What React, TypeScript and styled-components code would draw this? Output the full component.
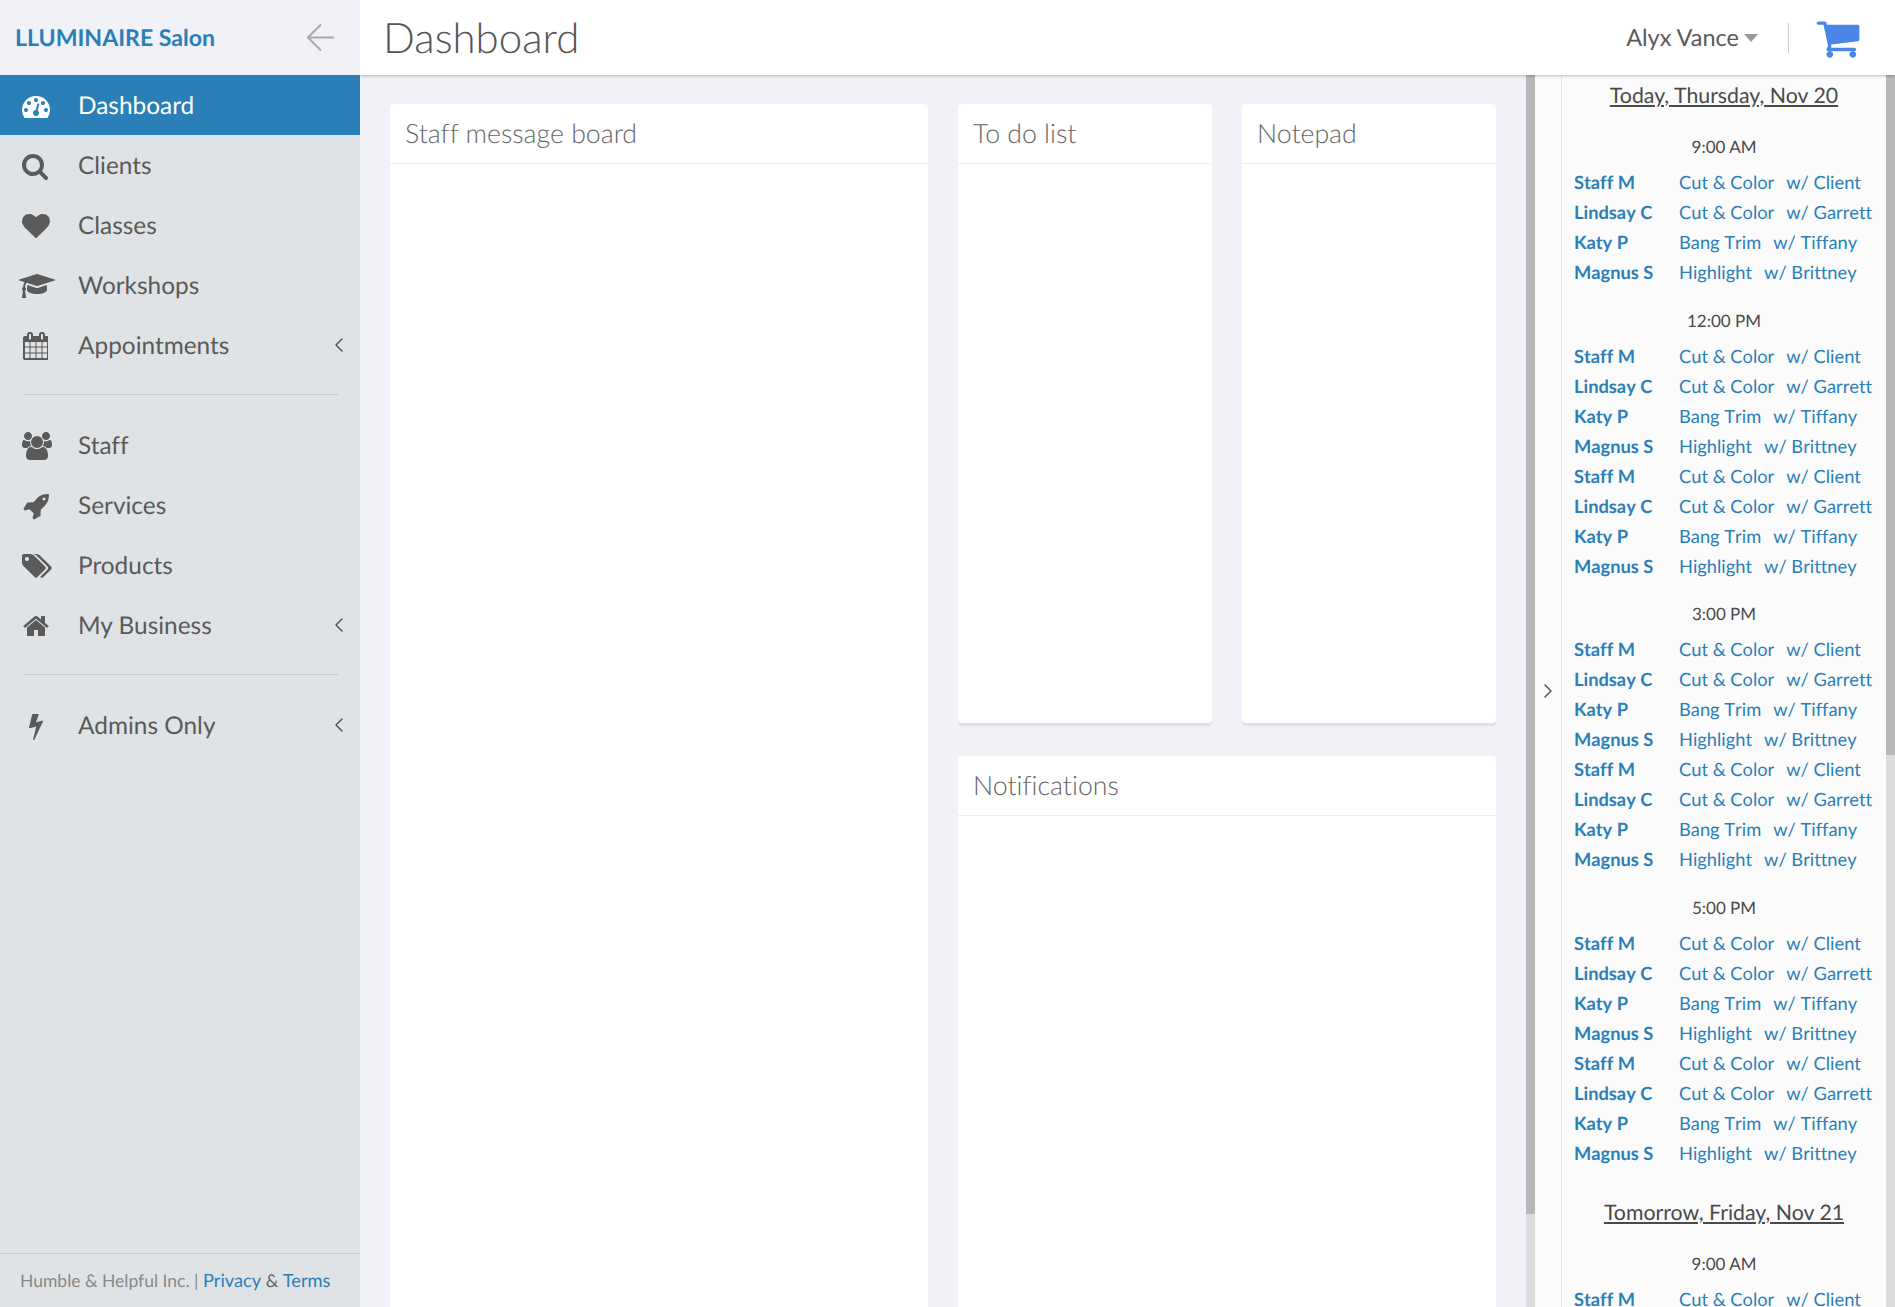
import React from 'react';
import styled, {createGlobalStyle} from 'styled-components';
import {FiArrowLeft, FiChevronLeft, FiChevronRight} from 'react-icons/fi';

const GlobalStyle = createGlobalStyle`
  html, body {
    margin: 0;
    height: 100%;
    overflow: hidden;
    font-family: Lato, "Open Sans", sans-serif;
    font-variant-ligatures: none;
    text-rendering: geometricPrecision;
    color: #555;
    background: #f0f2f7;
  }
  * { box-sizing: border-box; }
`

// font awesome 4 glyphs, the icon packages only carry the newer redraws
const glyphs = {
	dashboard: {w: 1792, d: 'M384 1152q0-53-37.500-90.500t-90.500-37.500-90.500 37.500-37.500 90.500 37.500 90.500 90.500 37.500 90.500-37.500 37.500-90.500zm192-448q0-53-37.500-90.500t-90.500-37.500-90.500 37.500-37.500 90.500 37.500 90.500 90.500 37.500 90.500-37.500 37.500-90.500zm428 481l101-382q6-26-7.500-48.500t-38.500-29.500-48 6.500-30 39.500l-101 382q-60 5-107 43.500t-63 98.500q-20 77 20 146t117 89 146-20 89-117q16-60-6-117t-72-91zm660-33q0-53-37.500-90.500t-90.500-37.500-90.500 37.500-37.500 90.500 37.500 90.500 90.500 37.500 90.500-37.500 37.500-90.500zm-640-640q0-53-37.500-90.500t-90.500-37.500-90.500 37.500-37.500 90.500 37.500 90.500 90.500 37.500 90.500-37.500 37.500-90.500zm448 192q0-53-37.500-90.500t-90.500-37.500-90.500 37.500-37.500 90.500 37.500 90.500 90.500 37.500 90.500-37.500 37.500-90.500zm320 448q0 261-141 483-19 29-54 29h-1402q-35 0-54-29-141-221-141-483 0-182 71-348t191-286 286-191 348-71 348 71 286 191 191 286 71 348z'},
	search: {w: 1792, d: 'M1216 832q0-185-131.500-316.500t-316.500-131.500-316.500 131.500-131.500 316.500 131.500 316.500 316.500 131.500 316.500-131.500 131.500-316.500zm512 832q0 52-38 90t-90 38q-54 0-90-38l-343-342q-179 124-399 124-143 0-273.500-55.500t-225-150-150-225-55.500-273.500 55.500-273.500 150-225 225-150 273.500-55.500 273.500 55.500 225 150 150 225 55.500 273.500q0 220-124 399l343 343q37 37 37 90z'},
	heart: {w: 1792, d: 'M896 1664q-26 0-44-18l-624-602q-10-8-27.500-26t-55.500-65.500-68-97.500-53.500-121-23.500-138q0-220 127-344t351-124q62 0 126.500 21.500t120 58 95.500 68.500 76 68q36-36 76-68t95.500-68.500 120-58 126.500-21.500q224 0 351 124t127 344q0 221-229 450l-623 600q-18 18-44 18z'},
	cap: {w: 2304, d: 'M1774 836l18 316q4 69-82 128t-235 93.500-323 34.500-323-34.500-235-93.500-82-128l18-316 574 181q22 7 48 7t48-7zm530-324q0 23-22 31l-1120 352q-4 1-10 1t-10-1l-652-206q-43 34-71 111.500t-34 178.500q63 36 63 109 0 69-58 107l58 433q2 14-8 25-9 11-24 11h-192q-15 0-24-11-10-11-8-25l58-433q-58-38-58-107 0-73 65-111 11-207 98-330l-333-104q-22-8-22-31t22-31l1120-352q4-1 10-1t10 1l1120 352q22 8 22 31z'},
	calendar: {w: 1664, d: 'M192 1664h288v-288h-288v288zm352 0h320v-288h-320v288zm-352-352h288v-320h-288v320zm352 0h320v-320h-320v320zm-352-384h288v-288h-288v288zm736 736h320v-288h-320v288zm-384-736h320v-288h-320v288zm768 736h288v-288h-288v288zm-384-352h320v-320h-320v320zm-352-864v-288q0-13-9.500-22.500t-22.500-9.500h-64q-13 0-22.500 9.500t-9.500 22.500v288q0 13 9.500 22.500t22.500 9.500h64q13 0 22.500-9.500t9.500-22.500zm736 864h288v-320h-288v320zm-384-384h320v-288h-320v288zm384 0h288v-288h-288v288zm32-480v-288q0-13-9.500-22.500t-22.500-9.500h-64q-13 0-22.500 9.500t-9.500 22.500v288q0 13 9.500 22.500t22.500 9.500h64q13 0 22.500-9.500t9.500-22.500zm384-64v1280q0 52-38 90t-90 38h-1408q-52 0-90-38t-38-90v-1280q0-52 38-90t90-38h128v-96q0-66 47-113t113-47h64q66 0 113 47t47 113v96h384v-96q0-66 47-113t113-47h64q66 0 113 47t47 113v96h128q52 0 90 38t38 90z'},
	users: {w: 1920, d: 'M593 896q-162 5-265 128h-134q-82 0-138-40.500t-56-118.500q0-353 124-353 6 0 43.500 21t97.500 42.500 119 21.500q67 0 133-23-5 37-5 66 0 139 81 256zm1071 637q0 120-73 189.500t-194 69.500h-874q-121 0-194-69.500t-73-189.500q0-53 3.500-103.500t14-109 26.500-108.500 43-97.500 62-81 85.500-53.500 111.500-20q10 0 43 21.500t73 48 107 48 135 21.500 135-21.500 107-48 73-48 43-21.500q61 0 111.500 20t85.500 53.500 62 81 43 97.500 26.500 108.500 14 109 3.500 103.500zm-1024-1277q0 106-75 181t-181 75-181-75-75-181 75-181 181-75 181 75 75 181zm704 384q0 159-112.500 271.500t-271.500 112.500-271.500-112.500-112.500-271.500 112.500-271.500 271.500-112.500 271.500 112.500 112.500 271.500zm576 225q0 78-56 118.500t-138 40.500h-134q-103-123-265-128 81-117 81-256 0-29-5-66 66 23 133 23 59 0 119-21.500t97.500-42.500 43.500-21q124 0 124 353zm-128-609q0 106-75 181t-181 75-181-75-75-181 75-181 181-75 181 75 75 181z'},
	rocket: {w: 1792, d: 'M1504 448q0-40-28-68t-68-28-68 28-28 68 28 68 68 28 68-28 28-68zm224-288q0 249-75.500 430.500t-253.500 360.500q-81 80-195 176l-20 379q-2 16-16 26l-384 224q-7 4-16 4-12 0-23-9l-64-64q-13-14-8-32l85-276-281-281-276 85q-3 1-9 1-14 0-23-9l-64-64q-17-19-5-39l224-384q10-14 26-16l379-20q96-114 176-195 188-187 358-258t431-71q14 0 24 9.500t10 22.500z'},
	tags: {w: 1920, d: 'M448 448q0-53-37.500-90.500t-90.500-37.500-90.500 37.500-37.500 90.500 37.500 90.500 90.500 37.500 90.500-37.500 37.500-90.500zm1067 576q0 53-37 90l-491 492q-39 37-91 37-53 0-90-37l-715-716q-38-37-64.500-101t-26.500-117v-416q0-52 38-90t90-38h416q53 0 117 26.500t102 64.500l715 714q37 39 37 91zm384 0q0 53-37 90l-491 492q-39 37-91 37-36 0-59-14t-53-45l470-470q37-37 37-90 0-52-37-91l-715-714q-38-38-102-64.500t-117-26.500h224q53 0 117 26.500t102 64.500l715 714q37 39 37 91z'},
	home: {w: 1792, d: 'M1472 992v480q0 26-19 45t-45 19h-384v-384h-256v384h-384q-26 0-45-19t-19-45v-480q0-1 .5-3t.5-3l575-474 575 474q1 2 1 6zm223-69l-62 74q-8 9-21 11h-3q-13 0-21-7l-692-577-692 577q-12 8-24 7-13-2-21-11l-62-74q-8-10-7-23.500t11-21.500l719-599q32-26 76-26t76 26l244 204v-195q0-14 9-23t23-9h192q14 0 23 9t9 23v408l219 182q10 8 11 21.500t-7 23.500z'},
	bolt: {w: 1792, d: 'M1333 566q18 20 7 44l-540 1157q-13 25-42 25-4 0-14-2-17-5-25.500-19t-4.500-30l197-808-406 101q-4 1-12 1-18 0-31-11-18-15-13-39l201-825q4-14 16-23t28-9h328q19 0 32 12.500t13 29.500q0 8-5 18l-171 463 396-98q8-2 12-2 19 0 34 15z'},
	cart: {w: 1792, d: 'M704 1536q0 52-38 90t-90 38-90-38-38-90 38-90 90-38 90 38 38 90zm896 0q0 52-38 90t-90 38-90-38-38-90 38-90 90-38 90 38 38 90zm128-1088v512q0 24-16.500 42.500t-40.500 21.500l-1044 122q13 60 13 70 0 16-24 64h920q26 0 45 19t19 45-19 45-45 19h-1024q-26 0-45-19t-19-45q0-11 8-31.500t16-36 21.500-40 15.500-29.500l-177-823h-204q-26 0-45-19t-19-45 19-45 45-19h256q16 0 28.500 6.500t19.500 15.500 13 24.500 8 26 5.500 29.500 4.500 26h1201q26 0 45 19t19 45z'},
}

type GlyphName = keyof typeof glyphs

const Glyph = ({name, size}: {name: GlyphName; size: number}) => (
	<svg width={size * glyphs[name].w / 1792} height={size} viewBox={`0 0 ${glyphs[name].w} 1792`} fill="currentColor">
		<path d={glyphs[name].d}/>
	</svg>
)

type NavEntry = {label: string; icon: GlyphName; iconLeft?: number; caret?: boolean; active?: boolean}

const navGroups: NavEntry[][] = [
	[
		{label: 'Dashboard', icon: 'dashboard', active: true},
		{label: 'Clients', icon: 'search', iconLeft: 21},
		{label: 'Classes', icon: 'heart'},
		{label: 'Workshops', icon: 'cap', iconLeft: 19},
		{label: 'Appointments', icon: 'calendar', caret: true},
	],
	[
		{label: 'Staff', icon: 'users'},
		{label: 'Services', icon: 'rocket'},
		{label: 'Products', icon: 'tags'},
		{label: 'My Business', icon: 'home', caret: true},
	],
	[
		{label: 'Admins Only', icon: 'bolt', caret: true},
	],
]

const rows = [
	{name: 'Staff M', service: 'Cut & Color', stylist: 'Client'},
	{name: 'Lindsay C', service: 'Cut & Color', stylist: 'Garrett'},
	{name: 'Katy P', service: 'Bang Trim', stylist: 'Tiffany'},
	{name: 'Magnus S', service: 'Highlight', stylist: 'Brittney'},
]

const Bookings = ({time, repeat = 1}: {time: string; repeat?: number}) => (
	<Slot>
		<SlotTime>{time}</SlotTime>
		{Array.from({length: repeat}).flatMap((_, i) => rows.map((r, j) => (
			<Booking key={`${i}-${j}`}>
				<ClientName>{r.name}</ClientName>
				<span>{r.service}</span>
				<span>w/ {r.stylist}</span>
			</Booking>
		)))}
	</Slot>
)

export default function App() {
	return (
		<Page>
			<GlobalStyle/>
			<Sidebar>
				<Brand>
					<BrandName>LLUMINAIRE Salon</BrandName>
					<FiArrowLeft size={43} strokeWidth={1.1} color="#a8a8a8"/>
				</Brand>
				<Nav>
					{navGroups.map((group, i) => (
						<NavGroup key={i}>
							{group.map(item => (
								<NavItem key={item.label} $active={item.active}>
									<NavIcon $left={item.iconLeft ?? 22}><Glyph name={item.icon} size={28}/></NavIcon>
									{item.label}
									{item.caret && <Caret><FiChevronLeft size={24} strokeWidth={1.5}/></Caret>}
								</NavItem>
							))}
						</NavGroup>
					))}
				</Nav>
				<SideFooter>
					<span>Humble &amp; Helpful Inc. | <FooterLink>Privacy</FooterLink> <Amp>&amp;</Amp> <FooterLink>Terms</FooterLink></span>
				</SideFooter>
			</Sidebar>
			<Content>
				<TopBar>
					<Title>Dashboard</Title>
					<UserMenu>
						Alyx Vance<UserCaret/>
					</UserMenu>
					<CartDivider/>
					<CartIcon><Glyph name="cart" size={46}/></CartIcon>
				</TopBar>
				<Body>
					<Main>
						<BoardColumn>
							<Card $tall>
								<CardTitle>Staff message board</CardTitle>
							</Card>
						</BoardColumn>
						<SideColumn>
							<TopCards>
								<Card><CardTitle>To do list</CardTitle></Card>
								<Card><CardTitle>Notepad</CardTitle></Card>
							</TopCards>
							<Card $tall>
								<CardTitle>Notifications</CardTitle>
							</Card>
						</SideColumn>
					</Main>
					<Scrollbar $thumb={1139}/>
					<Schedule>
						<Toggle><FiChevronRight size={24} strokeWidth={1.5}/></Toggle>
						<ScheduleList>
							<DayTitle>Today, Thursday, Nov 20</DayTitle>
							<Bookings time="9:00 AM"/>
							<Bookings time="12:00 PM" repeat={2}/>
							<Bookings time="3:00 PM" repeat={2}/>
							<Bookings time="5:00 PM" repeat={2}/>
							<DayTitle>Tomorrow, Friday, Nov 21</DayTitle>
							<Bookings time="9:00 AM"/>
						</ScheduleList>
					</Schedule>
					<Scrollbar $thumb={680}/>
				</Body>
			</Content>
		</Page>
	);
}

const Page = styled.div`
  display: flex;
  height: 1307px;
  overflow: hidden;
`
const Sidebar = styled.aside`
  width: 360px;
  flex: none;
  display: flex;
  flex-direction: column;
  background: #e0e3e6;
  position: relative;
  z-index: 2;
`
const Brand = styled.div`
  height: 75px;
  flex: none;
  display: flex;
  align-items: center;
  justify-content: space-between;
  padding: 0 18px 1px 15px;
  background: #f0f2f7;
`
const BrandName = styled.span`
  font-size: 23.1px;
  font-weight: 700;
  color: #2a7fb8;
`
const Nav = styled.nav`
  flex: 1;
`
const NavGroup = styled.div`
  padding-bottom: 20px;
  margin-bottom: 20px;
  position: relative;
  &:not(:last-child)::after {
    content: '';
    position: absolute;
    left: 23px;
    right: 22px;
    bottom: 0;
    height: 1px;
    background: #c8cacc;
  }
`
const NavItem = styled.a<{$active?: boolean}>`
  display: flex;
  align-items: center;
  height: 60px;
  padding-left: 78px;
  position: relative;
  font-size: 24.4px;
  color: ${p => p.$active ? '#fff' : '#5a5a5a'};
  background: ${p => p.$active ? '#2a7fb8' : 'transparent'};
`
const NavIcon = styled.span<{$left: number}>`
  position: absolute;
  left: ${p => p.$left}px;
  top: 17px;
  display: flex;
`
const Caret = styled.span`
  position: absolute;
  right: 9px;
  display: flex;
  color: #555;
`
const SideFooter = styled.footer`
  height: 54px;
  flex: none;
  border-top: 1px solid #c8cacc;
  padding: 0 0 2px 20px;
  display: flex;
  align-items: center;
  font-size: 17.5px;
  color: #888;
  white-space: pre;
`
const FooterLink = styled.span`
  font-size: 18.3px;
  color: #2a7fb8;
`
const Amp = styled.span`
  color: #666;
`
const Content = styled.div`
  flex: 1;
  min-width: 0;
  display: flex;
  flex-direction: column;
`
const TopBar = styled.header`
  height: 75px;
  flex: none;
  display: flex;
  align-items: center;
  background: #fff;
  padding: 0 34px 0 23px;
  box-shadow: 0 1px 3px rgba(0, 0, 0, 0.25);
  position: relative;
  z-index: 1;
`
const Title = styled.h1`
  flex: 1;
  margin: 0 0 2px;
  font-size: 42px;
  font-weight: 300;
  color: #555;
`
const UserMenu = styled.div`
  display: flex;
  align-items: center;
  font-size: 23.5px;
  color: #5a5a5a;
`
const UserCaret = styled.span`
  margin-left: 5px;
  border-left: 7px solid transparent;
  border-right: 7px solid transparent;
  border-top: 8px solid #999;
`
const CartDivider = styled.span`
  width: 1px;
  height: 30px;
  margin: 0 26px 0 30px;
  background: #ccc;
`
const CartIcon = styled.span`
  display: flex;
  color: #4a86e8;
`
const Body = styled.div`
  flex: 1;
  min-height: 0;
  display: flex;
`
const Main = styled.main`
  flex: 1;
  display: flex;
  gap: 30px;
  padding: 29px 30px 0;
  min-width: 0;
`
const BoardColumn = styled.div`
  width: 538px;
  flex: none;
  display: flex;
`
const SideColumn = styled.div`
  flex: 1;
  display: flex;
  flex-direction: column;
  gap: 33px;
`
const TopCards = styled.div`
  display: grid;
  grid-template-columns: 1fr 1fr;
  gap: 30px;
  height: 619px;
  flex: none;
`
const Card = styled.section<{$tall?: boolean}>`
  flex: 1;
  background: #fff;
  border-radius: 4px;
  box-shadow: 0 3px 0 #e0e2e6;
  ${p => p.$tall ? 'margin-bottom: -40px;' : ''}
`
const CardTitle = styled.h2`
  margin: 0;
  height: 60px;
  padding: 0 15px 1px;
  display: flex;
  align-items: center;
  font-size: 26.7px;
  font-weight: 300;
  color: #666;
  border-bottom: 1px solid #eceef0;
`
const Scrollbar = styled.div<{$thumb: number}>`
  width: 9px;
  flex: none;
  background: linear-gradient(#b8b8b8 ${p => p.$thumb}px, #dcdcdc ${p => p.$thumb}px);
`
const Schedule = styled.div`
  width: 351px;
  flex: none;
  display: flex;
  background: #fbfbfb;
  overflow: hidden;
`
const Toggle = styled.div`
  width: 27px;
  flex: none;
  display: flex;
  align-items: center;
  justify-content: center;
  border-right: 1px solid #e4e4e4;
  color: #555;
`
const ScheduleList = styled.div`
  flex: 1;
  min-width: 0;
  padding: 6px 0 0 12px;
`
const Slot = styled.div`
  padding-bottom: 21.5px;
`
const DayTitle = styled.h3`
  margin: 0 0 0 -12px;
  font-size: 21.3px;
  font-weight: 400;
  text-align: center;
  text-decoration: underline;
  color: #4a4a4a;
  line-height: 28px;
  padding-bottom: 26px;
  ${Slot} + & {
    margin-top: 9px;
  }
`
const SlotTime = styled.div`
  margin: 0 0 0 -12px;
  text-align: center;
  font-size: 17px;
  color: #4a4a4a;
  line-height: 24px;
  padding-bottom: 8px;
`
const Booking = styled.div`
  height: 30px;
  display: flex;
  align-items: center;
  font-size: 18.3px;
  font-kerning: none;
  color: #2a7fb8;
  white-space: nowrap;
  gap: 12px;
`
const ClientName = styled.strong`
  width: 93px;
  flex: none;
`
